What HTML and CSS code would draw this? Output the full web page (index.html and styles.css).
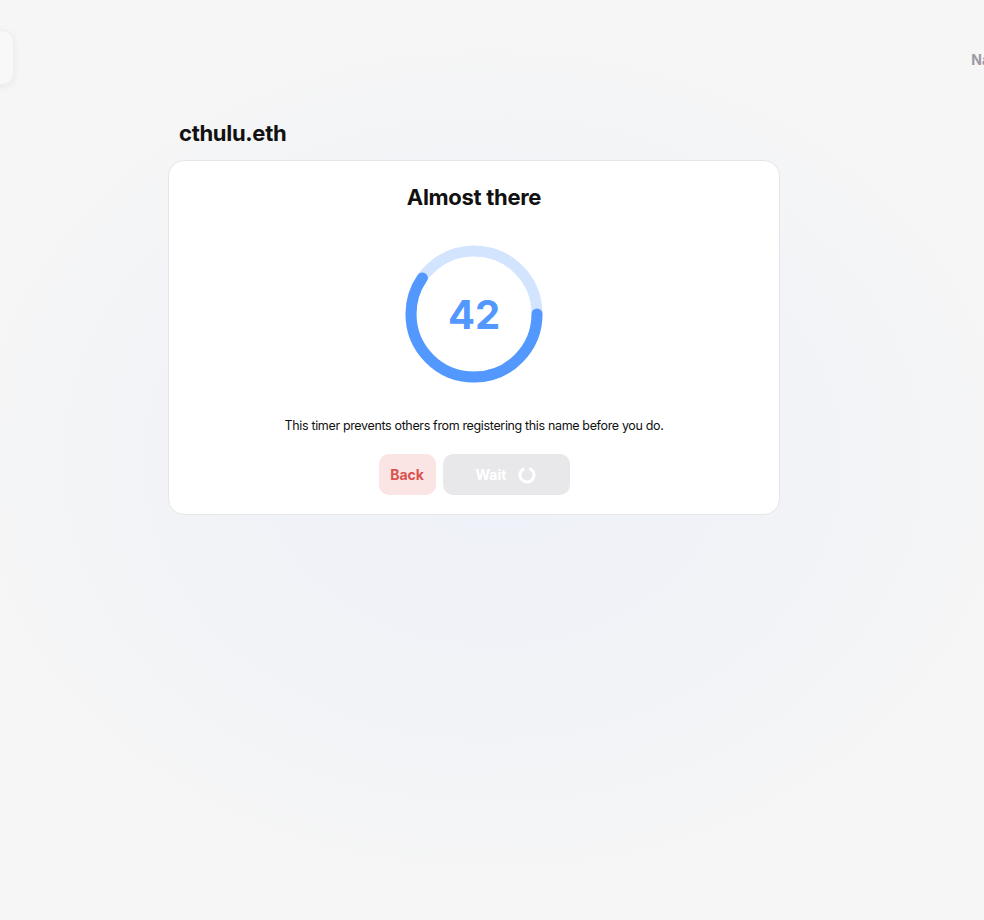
FILE: index.html
```html
<!DOCTYPE html>
<html lang="en">
<head>
<meta charset="utf-8">
<title>cthulu.eth</title>
<link rel="stylesheet" href="styles.css">
</head>
<body>
<div class="page">
  <header class="topbar">
    <div class="logo-box"></div>
    <nav class="nav"><span class="nav-link">Names</span></nav>
  </header>
  <main class="main">
    <h1 class="name">cthulu.eth</h1>
    <section class="card">
      <h2 class="card-title">Almost there</h2>
      <div class="timer">
        <svg class="ring" width="138" height="138" viewBox="0 0 138 138">
          <circle class="ring-bg" cx="69" cy="69" r="63"/>
          <circle class="ring-fg" cx="69" cy="69" r="63" stroke-dasharray="236 400"/>
        </svg>
        <span class="count">42</span>
      </div>
      <p class="desc">This timer prevents others from registering this name before you do.</p>
      <div class="actions">
        <button class="btn btn-back">Back</button>
        <button class="btn btn-wait">Wait
          <svg class="spinner" width="18" height="18" viewBox="0 0 18 18">
            <circle cx="9" cy="9" r="7" fill="none" stroke="#fff" stroke-width="3" stroke-dasharray="36 8" stroke-linecap="round" transform="rotate(-60 9 9)"/>
          </svg>
        </button>
      </div>
    </section>
  </main>
</div>
</body>
</html>
```
FILE: styles.css
```css
html, body {
  margin: 0;
  height: 100%;
}
body {
  overflow: hidden;
  font-family: Inter, "Liberation Sans", sans-serif;
  color: #111;
  background: radial-gradient(ellipse 70% 60% at 50% 50%, #eef1f8 0%, #f1f3f7 45%, #f6f6f6 80%, #f6f6f6 100%);
}
.page {
  min-height: 100%;
}
.topbar {
  display: flex;
  justify-content: space-between;
  align-items: flex-start;
  margin: 0 -35px 0 -40px;
  padding-top: 30px;
  height: 60px;
}
.logo-box {
  width: 52px;
  height: 53px;
  background: #f8f8f9;
  border-radius: 12px;
  box-shadow: 0 2px 8px rgba(0,0,0,0.06);
  border: 1px solid #efefef;
}
.nav {
  padding-top: 19px;
}
.nav-link {
  font-size: 14px;
  font-weight: 700;
  color: #9b9ba6;
}
.main {
  width: 612px;
  margin-left: 168px;
  padding-top: 28px;
}
.name {
  margin: 0 0 12px 11px;
  font-size: 22px;
  line-height: 30px;
  font-weight: 700;
  color: #111;
  letter-spacing: -0.3px;
}
.card {
  background: #fff;
  border: 1px solid #e6e6e9;
  border-radius: 16px;
  padding: 21px 0 19px;
  display: flex;
  flex-direction: column;
  align-items: center;
}
.card-title {
  margin: 0;
  font-size: 22px;
  line-height: 30px;
  font-weight: 700;
  letter-spacing: -0.3px;
}
.timer {
  position: relative;
  width: 138px;
  height: 138px;
  margin-top: 33px;
}
.ring {
  display: block;
}
.ring-bg {
  fill: none;
  stroke: #d3e4fe;
  stroke-width: 11;
}
.ring-fg {
  fill: none;
  stroke: #5298ff;
  stroke-width: 11;
  stroke-linecap: round;
}
.count {
  position: absolute;
  inset: 0;
  display: flex;
  align-items: center;
  justify-content: center;
  font-size: 40px;
  font-weight: 700;
  color: #5298ff;
}
.desc {
  margin: 34px 0 0;
  font-size: 12.5px;
  line-height: 18px;
  color: #111;
  letter-spacing: -0.35px;
}
.actions {
  display: flex;
  gap: 7px;
  margin-top: 19px;
}
.btn {
  font-family: inherit;
  border: none;
  border-radius: 10px;
  height: 41px;
  font-size: 14px;
  font-weight: 700;
  display: flex;
  align-items: center;
  justify-content: center;
  cursor: pointer;
}
.btn-back {
  width: 57px;
  background: #fae4e4;
  color: #d9534f;
}
.btn-wait {
  width: 127px;
  background: #e8e8eb;
  color: #fff;
  gap: 12px;
}
.spinner {
  display: block;
}
```
